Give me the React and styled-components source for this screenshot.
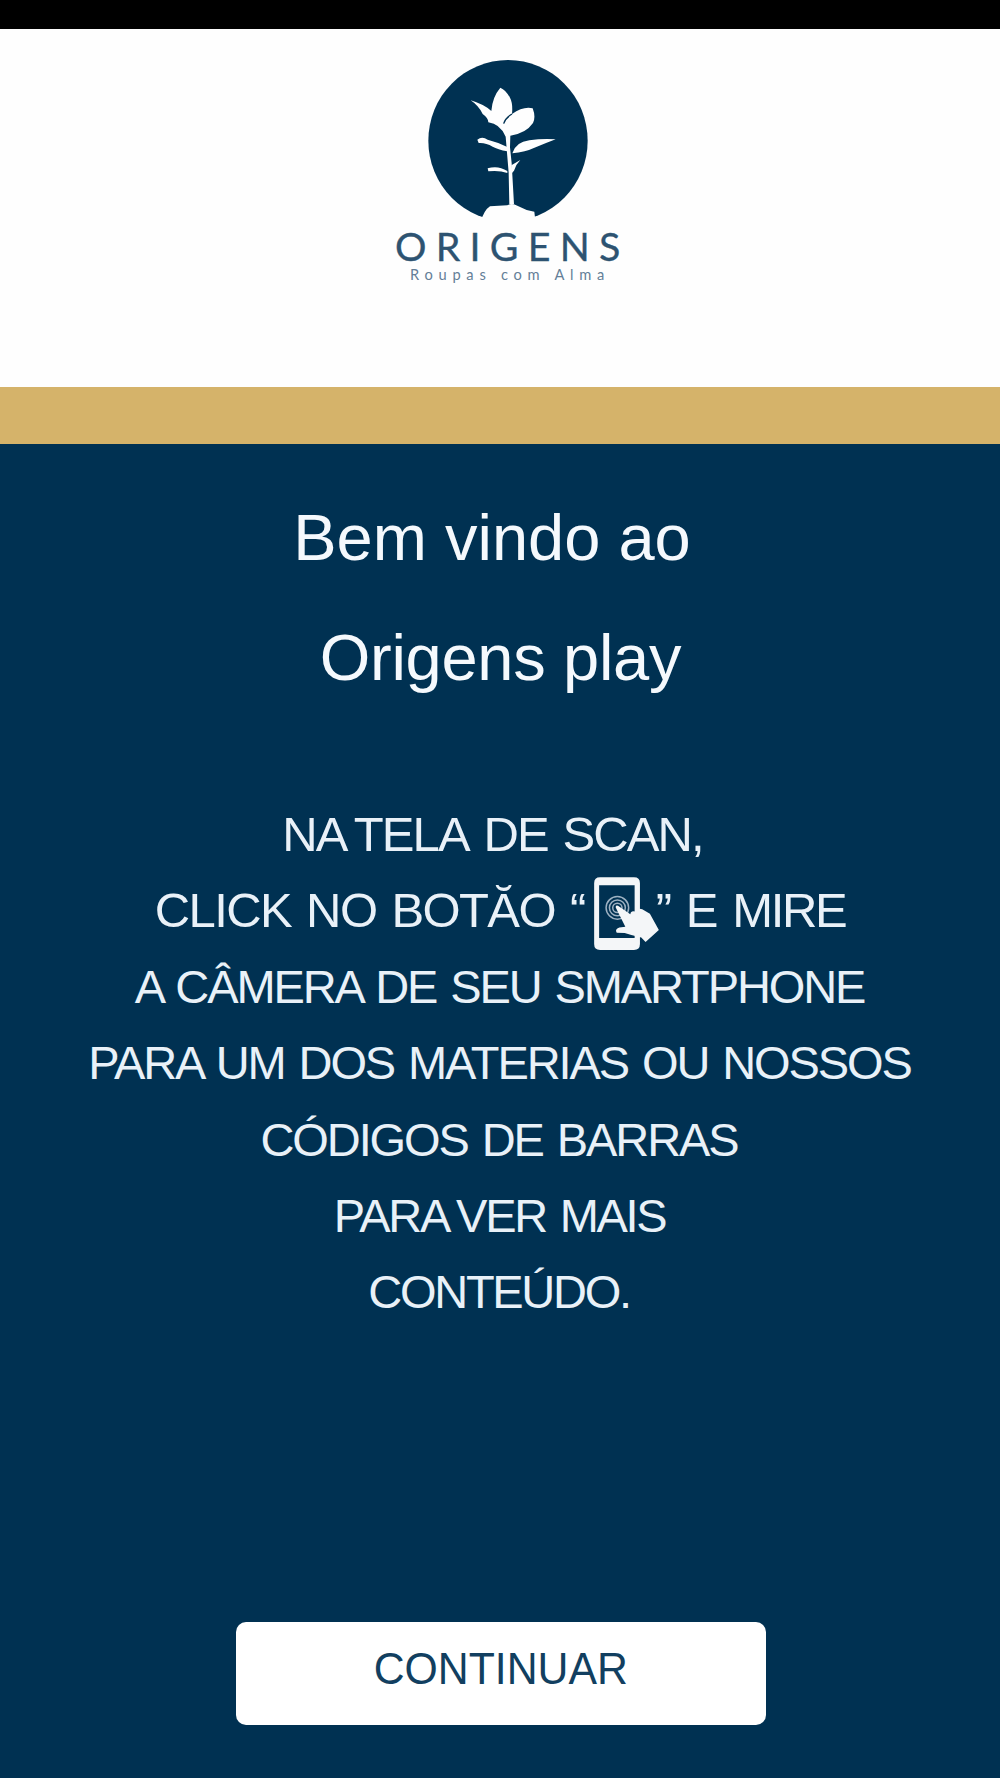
import React from "react";
import styled, { createGlobalStyle } from "styled-components";

const GlobalStyle = createGlobalStyle`
  body {
    margin: 0;
    background-color: #003152;
  }
`;

const Screen = styled.div`
  display: flex;
  flex-direction: column;
  width: 1000px;
  height: 1778px;
  overflow: hidden;
  background-color: #003152;
  font-family: "Liberation Sans", Arial, sans-serif;
`;

const StatusBar = styled.div`
  flex: none;
  height: 29px;
  background-color: #000;
`;

const Header = styled.header`
  flex: none;
  display: flex;
  justify-content: center;
  box-sizing: border-box;
  height: 358px;
  padding: 11px 0 0 20px;
  background-color: #fefefe;
`;

const GoldStripe = styled.div`
  flex: none;
  height: 57px;
  background-color: #d5b36a;
`;

const Welcome = styled.h1`
  margin: 34px 0 0;
  color: #f5f9fd;
  font-size: 65px;
  font-weight: normal;
  line-height: 120px;
  text-align: center;
`;

const WelcomeLine = styled.span`
  display: block;
  white-space: nowrap;
  letter-spacing: ${(props) => props.$spacing || "0"};
  margin-left: ${(props) => props.$shift || "0"};
`;

const Instructions = styled.div`
  margin-top: 78px;
  color: #e9f1f8;
`;

const Line = styled.p`
  display: flex;
  justify-content: center;
  align-items: center;
  height: 76.4px;
  margin: 0 0 0 ${(props) => props.$shift || "0"};
  font-size: ${(props) => (props.$large ? "49px" : "47px")};
  line-height: 76.4px;
  white-space: pre;
  letter-spacing: ${(props) => props.$spacing || "-2.1px"};
  word-spacing: 3px;
`;

const Tight = styled.span`
  word-spacing: -1px;
`;

const AfterIcon = styled.span`
  letter-spacing: -2.4px;
  word-spacing: 5px;
`;

const ScanIcon = styled.svg`
  flex: none;
  width: 65px;
  height: 73px;
  margin: 6px -3px 0 9px;
`;

const Button = styled.button`
  display: flex;
  justify-content: center;
  width: 530px;
  height: 103px;
  margin: auto auto 53px 236px;
  padding: 0;
  border: none;
  border-radius: 10px;
  background-color: #fff;
  color: #123f60;
  font-family: inherit;
  font-size: 45px;
  line-height: 94px;
`;

const ButtonLabel = styled.span`
  transform: scaleX(0.95);
`;

function Logo() {
  return (
    <svg width="260" height="260" viewBox="0 0 780 780">
      <ellipse cx="384" cy="302" rx="239" ry="242" fill="#003152" />
      <g fill="#fefefe">
        <path d="M300 550 Q312 510 330 499 L382 496 Q396 488 412 497 L440 510 L463 515 L467 550 Z" />
        <path d="M272 181 Q312 193 334 213 Q337 171 361 143 Q377 149 390 173 Q399 190 396 222 Q430 198 458 205 Q468 231 459 249 Q438 280 391 287 L390 322 L395 370 L402 493 L388 493 L386 398 L377 290 Q360 251 325 247 Q325 234 308 222 Q296 197 272 181 Z" />
        <path d="M292 299 Q306 288 323 299 Q355 307 382 321 L382 334 Q353 328 338 320 Q316 307 296 309 Z" />
        <path d="M397 340 Q407 306 448 301 Q488 295 527 298 Q493 311 467 322 Q435 337 397 340 Z" />
        <path d="M323 385 Q354 375 382 393 L382 399 Q357 390 325 394 Z" />
        <path d="M394 376 L421 360 Q407 374 402 392 L396 399 Z" />
      </g>
      <path d="M371 251 Q376 234 396 222" fill="none" stroke="#003152" strokeWidth="4" />
      <g fontFamily="Lato, sans-serif">
        <text
          x="45"
          y="662"
          fontSize="118"
          fill="#2d5371"
          stroke="#2d5371"
          strokeWidth="1"
          textLength="676"
        >
          ORIGENS
        </text>
        <text x="90" y="719" fontSize="44" fill="#647f98" textLength="583">
          Roupas com Alma
        </text>
      </g>
    </svg>
  );
}

function PhoneTap() {
  return (
    <ScanIcon viewBox="98 50 195 220">
      <path
        fill="#f4f6f8"
        fillRule="evenodd"
        d="M116 51 H218 Q236 51 236 69 V252 Q236 270 218 270 H116 Q98 270 98 252 V69 Q98 51 116 51 Z M113 75 V234 H220 V75 Z"
      />
      <g fill="none" stroke="#9db1c2" strokeWidth="4.5">
        <circle cx="168" cy="143" r="34" />
        <circle cx="168" cy="143" r="24" />
        <circle cx="168" cy="143" r="14" />
      </g>
      <path
        fill="#f4f6f8"
        d="M163 142 Q162 134 170 137 L207 162 Q209 151 220 154 Q229 142 243 147 L266 161 L293 210 L253 246 L240 232 Q210 226 190 219 L166 218 Q159 207 174 202 L192 200 Z"
      />
    </ScanIcon>
  );
}

export default function App() {
  return (
    <>
      <GlobalStyle />
      <Screen>
        <StatusBar />
        <Header>
          <Logo />
        </Header>
        <GoldStripe />
        <Welcome>
          <WelcomeLine $shift="-16px">Bem vindo ao</WelcomeLine>
          <WelcomeLine $shift="1px" $spacing="-0.3px">
            Origens play
          </WelcomeLine>
        </Welcome>
        <Instructions>
          <Line $large $shift="-15px" $spacing="-1.9px">
            <Tight>NA TELA</Tight> DE SCAN,
          </Line>
          <Line $large $spacing="-1.6px">
            CLICK NO BOTĂO “<PhoneTap />
            <AfterIcon>” E MIRE</AfterIcon>
          </Line>
          <Line $shift="-1px">A CÂMERA DE SEU SMARTPHONE</Line>
          <Line $shift="-1px">PARA UM DOS MATERIAS OU NOSSOS</Line>
          <Line $shift="-2px">CÓDIGOS DE BARRAS</Line>
          <Line $shift="-1px" $spacing="-2.3px">
            <Tight>PARA VER</Tight> MAIS
          </Line>
          <Line $shift="-2px" $spacing="-2.3px">
            CONTEÚDO.
          </Line>
        </Instructions>
        <Button>
          <ButtonLabel>CONTINUAR</ButtonLabel>
        </Button>
      </Screen>
    </>
  );
}
